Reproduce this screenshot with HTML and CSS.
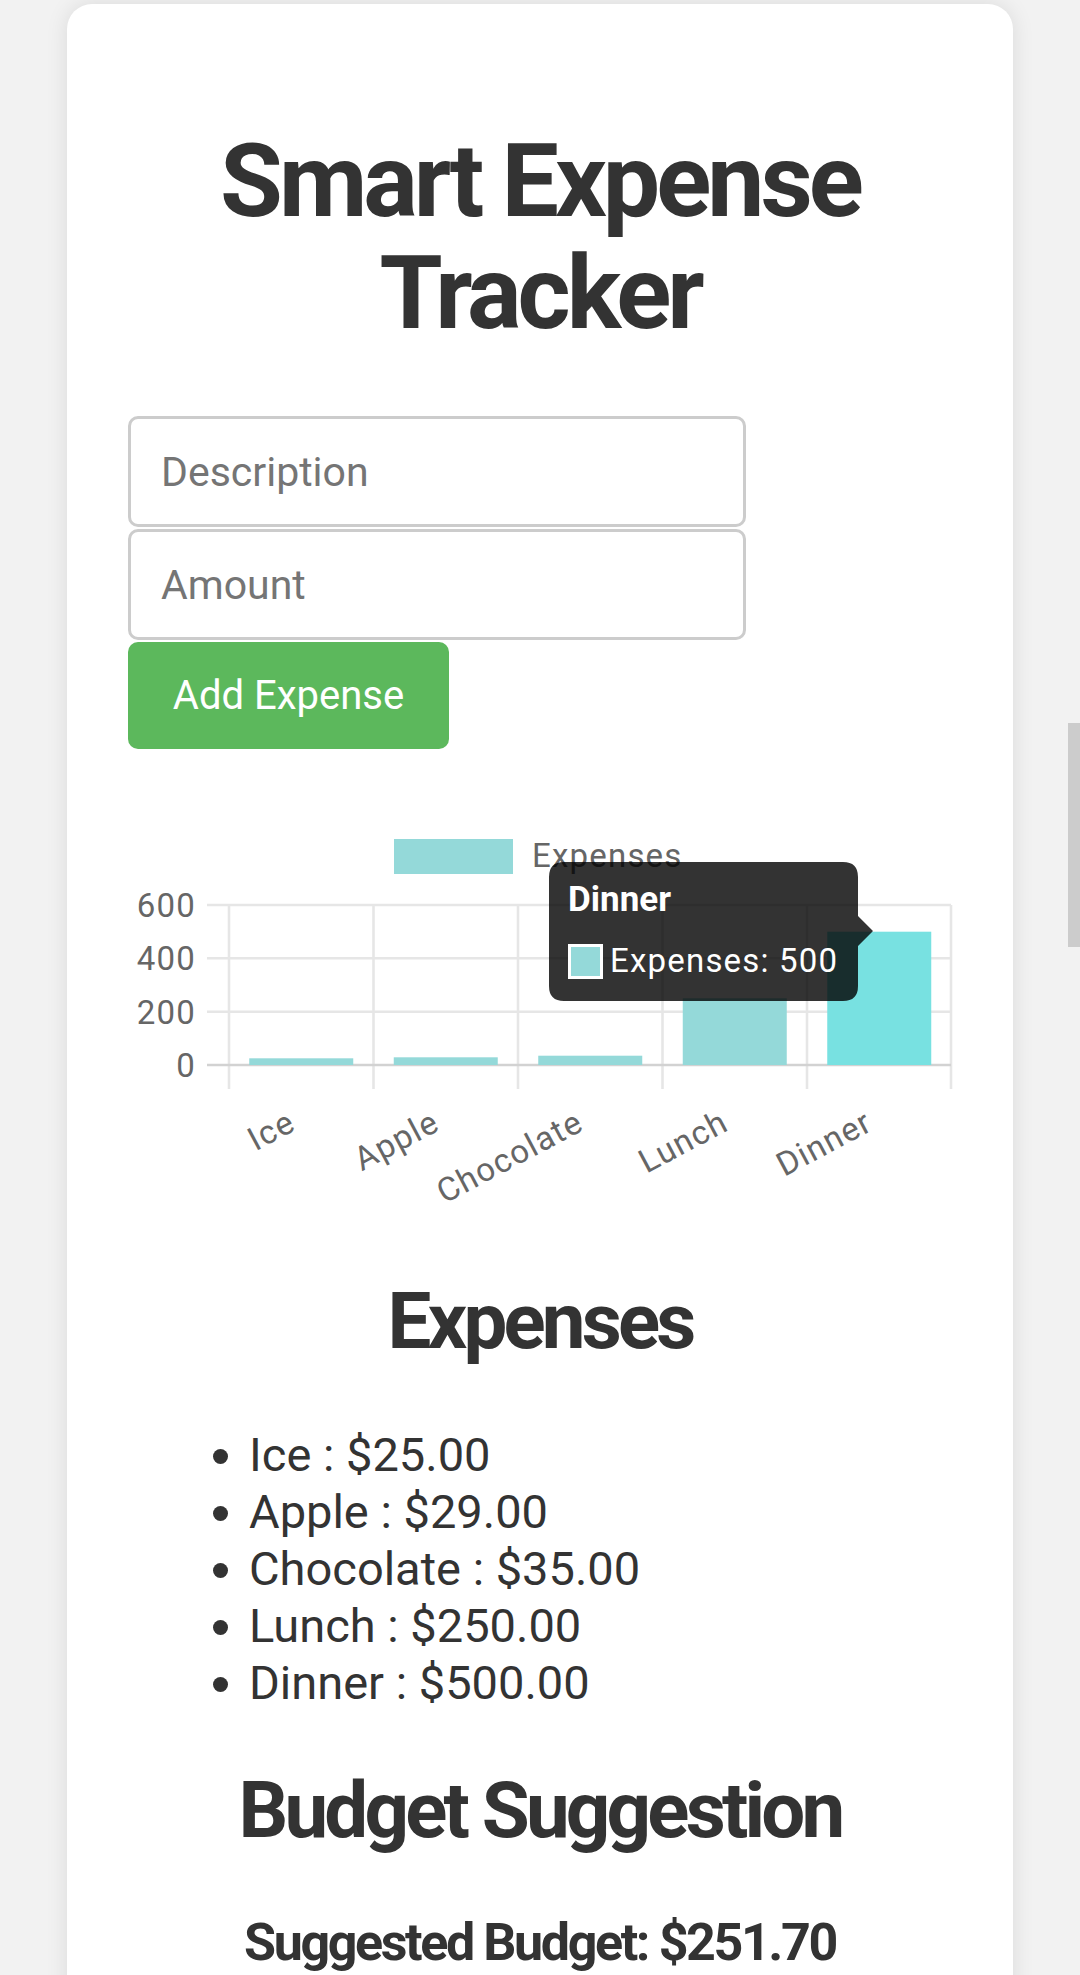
FILE: index.html
```html
<!DOCTYPE html>
<html lang="en">
<head>
  <meta charset="UTF-8">
  <title>Smart Expense Tracker</title>
  <link rel="stylesheet" href="styles.css">
</head>

<body>

  <div class="container">
    <h1>Smart Expense Tracker</h1>

    <div class="expense-form">
      <input type="text" id="description" placeholder="Description">
      <input type="number" id="amount" placeholder="Amount">
      <button class="add-btn">Add Expense</button>
    </div>

    <!-- bar chart with the hover tooltip on Dinner -->
    <svg class="chart" viewBox="128 790 824 430" width="824" height="430">
      <rect x="394" y="840" width="119" height="35" fill="#94d9d9"/>
      <text class="chart-label" x="532" y="868">Expenses</text>

      <g class="grid">
        <line x1="207" y1="906" x2="951" y2="906"/>
        <line x1="207" y1="959.3" x2="951" y2="959.3"/>
        <line x1="207" y1="1012.7" x2="951" y2="1012.7"/>
        <line x1="229" y1="906" x2="229" y2="1090"/>
        <line x1="373.5" y1="906" x2="373.5" y2="1090"/>
        <line x1="518" y1="906" x2="518" y2="1090"/>
        <line x1="662.5" y1="906" x2="662.5" y2="1090"/>
        <line x1="807" y1="906" x2="807" y2="1090"/>
        <line x1="951" y1="906" x2="951" y2="1090"/>
      </g>
      <line class="zero-line" x1="207" y1="1066" x2="951" y2="1066"/>

      <g class="chart-label y-label">
        <text x="196" y="918">600</text>
        <text x="196" y="971">400</text>
        <text x="196" y="1025">200</text>
        <text x="196" y="1078">0</text>
      </g>

      <rect x="249.25" y="1059.3" width="104" height="6.7" fill="#94d9d9"/>
      <rect x="393.75" y="1058.3" width="104" height="7.7" fill="#94d9d9"/>
      <rect x="538.25" y="1056.7" width="104" height="9.3" fill="#94d9d9"/>
      <rect x="682.75" y="999.3" width="104" height="66.7" fill="#94d9d9"/>
      <rect x="827.25" y="932.7" width="104" height="133.3" fill="#78e1e1"/>

      <g class="chart-label x-label">
        <text x="292" y="1120" transform="rotate(-28 292 1120)">Ice</text>
        <text x="436" y="1120" transform="rotate(-28 436 1120)">Apple</text>
        <text x="580" y="1120" transform="rotate(-28 580 1120)">Chocolate</text>
        <text x="725" y="1120" transform="rotate(-28 725 1120)">Lunch</text>
        <text x="869" y="1120" transform="rotate(-28 869 1120)">Dinner</text>
      </g>

      <path class="tooltip" d="M564 863 H843 Q858 863 858 878 V917 L873 932 L858 947 V987 Q858 1002 843 1002 H564 Q549 1002 549 987 V878 Q549 863 564 863 Z"/>
      <text class="tooltip-title" x="568" y="912">Dinner</text>
      <rect x="569.5" y="946.5" width="32" height="32" fill="#94d9d9" stroke="#fff" stroke-width="3"/>
      <text class="tooltip-text" x="610" y="973">Expenses: 500</text>
    </svg>

    <h2>Expenses</h2>
    <ul class="expense-list">
      <li>Ice : $25.00</li>
      <li>Apple : $29.00</li>
      <li>Chocolate : $35.00</li>
      <li>Lunch : $250.00</li>
      <li>Dinner : $500.00</li>
    </ul>

    <h2>Budget Suggestion</h2>
    <p class="budget">Suggested Budget: $251.70</p>
  </div>

  <div class="scroll-thumb"></div>

</body>
</html>
```

FILE: styles.css
```css
html, body {
  height: 1975px;
  overflow: hidden;
}

body {
  margin: 0;
  font-family: Roboto, "Liberation Sans", Arial, sans-serif;
  background-color: #f2f2f2;
  color: #333;
}

.container {
  width: 946px;
  box-sizing: border-box;
  margin: 4px auto 0;
  padding: 121px 61px 80px;
  background: #fff;
  border-radius: 25px;
  box-shadow: 0 0 22px rgba(0, 0, 0, 0.1);
  text-align: center;
}

h1 {
  font-size: 102px;
  line-height: 112px;
  font-weight: bold;
  letter-spacing: -4px;
  margin: 0 0 67px;
}

.expense-form {
  display: flex;
  flex-direction: column;
  align-items: flex-start;
  gap: 2px;
}

input {
  width: 618px;
  height: 111px;
  box-sizing: border-box;
  padding: 0 30px;
  border: 3px solid #ccc;
  border-radius: 10px;
  font-family: inherit;
  font-size: 41px;
  color: #333;
}

input::placeholder {
  color: #757575;
}

.add-btn {
  width: 321px;
  height: 107px;
  border: none;
  border-radius: 10px;
  background-color: #5cb85c;
  color: #fff;
  font-family: inherit;
  font-size: 40px;
  cursor: pointer;
}

.chart {
  display: block;
  margin-top: 40px;
  overflow: visible;
}

.chart-label {
  font-family: Roboto, "Liberation Sans", sans-serif;
  font-size: 33px;
  letter-spacing: 1.2px;
  fill: #666;
}

.y-label {
  text-anchor: end;
}

.x-label {
  text-anchor: end;
  dominant-baseline: central;
}

.grid line {
  stroke: #e6e6e6;
  stroke-width: 2.6;
}

.zero-line {
  stroke: #d2d2d2;
  stroke-width: 2.6;
}

.tooltip {
  fill: rgba(0, 0, 0, 0.8);
}

.tooltip-title {
  font-family: Roboto, sans-serif;
  font-size: 35px;
  font-weight: bold;
  fill: #fff;
}

.tooltip-text {
  font-family: Roboto, sans-serif;
  font-size: 33px;
  letter-spacing: 1.2px;
  fill: #fff;
}

h2 {
  font-size: 78px;
  line-height: 90px;
  font-weight: bold;
  letter-spacing: -3.8px;
  margin: 58px 0 59px;
}

.expense-list {
  text-align: left;
  margin: 0;
  padding-left: 121px;
  font-size: 47px;
  line-height: 57px;
}

.expense-list + h2 {
  margin: 55px 0 56px;
}

.budget {
  font-size: 52px;
  font-weight: bold;
  letter-spacing: -2.4px;
  margin: 0;
}

.scroll-thumb {
  position: fixed;
  right: 0;
  top: 723px;
  width: 12px;
  height: 224px;
  background: #ccc;
}
```
